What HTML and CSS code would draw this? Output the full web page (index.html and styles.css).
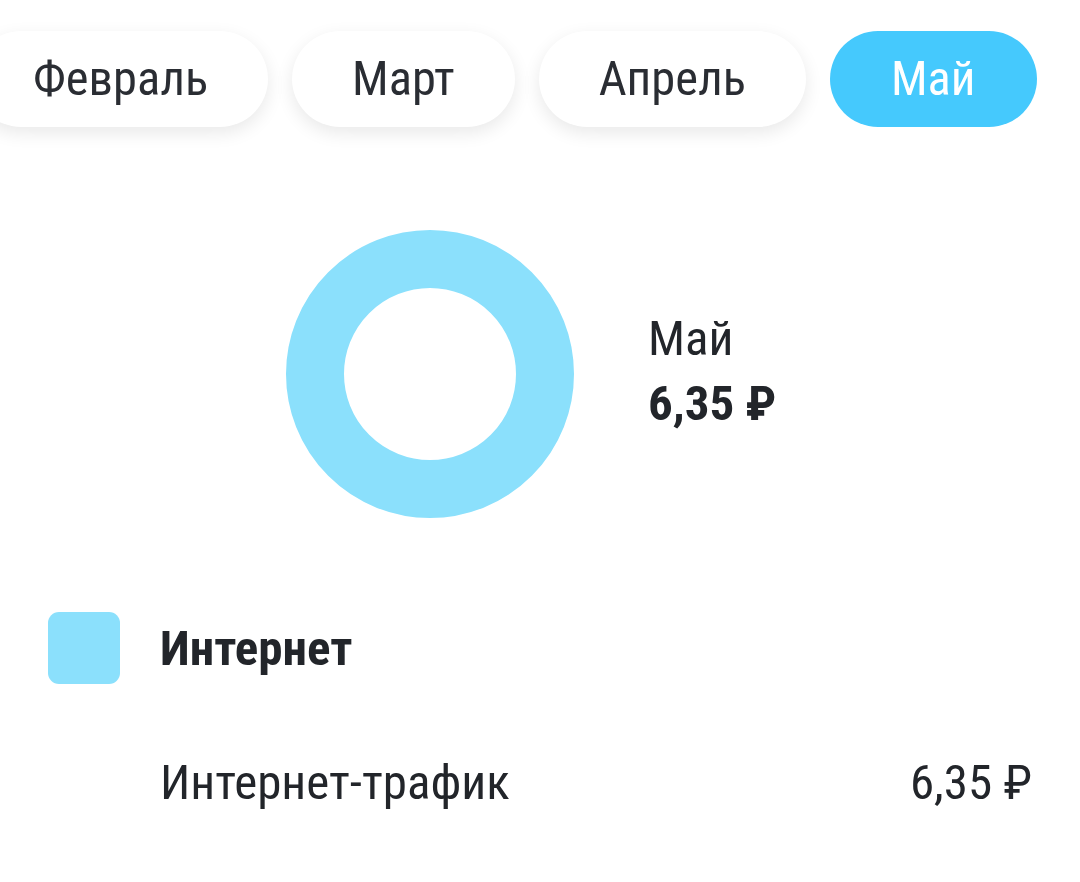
FILE: index.html
```html
<!DOCTYPE html>
<html lang="ru">
<head>
<meta charset="utf-8">
<link rel="stylesheet" href="styles.css">
</head>
<body>
<div class="page">
  <div class="months">
    <div class="chip first">Февраль</div>
    <div class="chip">Март</div>
    <div class="chip">Апрель</div>
    <div class="chip active">Май</div>
  </div>

  <div class="summary">
    <svg class="donut" width="288" height="288" viewBox="0 0 288 288">
      <circle cx="144" cy="144" r="115" fill="none" stroke="#8be0fc" stroke-width="58"/>
    </svg>
    <div class="total">
      <div class="total-month">Май</div>
      <div class="total-sum">6,35 ₽</div>
    </div>
  </div>

  <div class="category">
    <span class="swatch"></span>
    <span class="category-name">Интернет</span>
  </div>

  <div class="item">
    <span class="item-name">Интернет-трафик</span>
    <span class="item-sum">6,35 ₽</span>
  </div>
</div>
</body>
</html>
```

FILE: styles.css
```css
html, body {
  margin: 0;
  padding: 0;
  background: #ffffff;
}

body {
  font-family: "Roboto Condensed", Roboto, sans-serif;
  color: #22252a;
  width: 1080px;
  height: 882px;
  overflow: hidden;
}

.page {
  display: flex;
  flex-direction: column;
}

.months {
  display: flex;
  gap: 24px;
  padding-top: 31px;
  margin-left: -27px;
}

.chip {
  flex: none;
  height: 96px;
  padding: 0 60px;
  border-radius: 48px;
  background: #ffffff;
  box-shadow: 0 6px 18px rgba(0, 0, 0, 0.09);
  display: flex;
  align-items: center;
  font-size: 48.5px;
  line-height: 1;
  color: #2a2d33;
}

.chip.active {
  background: #45c9fd;
  color: #ffffff;
  box-shadow: none;
  padding: 0 61px;
}

.summary {
  display: flex;
  align-items: center;
  gap: 74px;
  padding-left: 286px;
  margin-top: 103px;
}

.donut {
  display: block;
  flex: none;
}

.total {
  font-size: 49px;
  line-height: 65px;
  padding-bottom: 6px;
}

.total-sum {
  font-weight: 700;
}

.category {
  display: flex;
  align-items: center;
  gap: 40px;
  padding-left: 48px;
  margin-top: 94px;
  height: 72px;
}

.swatch {
  width: 72px;
  height: 72px;
  border-radius: 11px;
  background: #8be0fc;
  flex: none;
}

.category-name {
  font-size: 49px;
  font-weight: 700;
  line-height: 65px;
}

.item {
  display: flex;
  justify-content: space-between;
  padding: 0 48px 0 160px;
  margin-top: 66px;
  font-size: 49px;
  line-height: 65px;
}
```
